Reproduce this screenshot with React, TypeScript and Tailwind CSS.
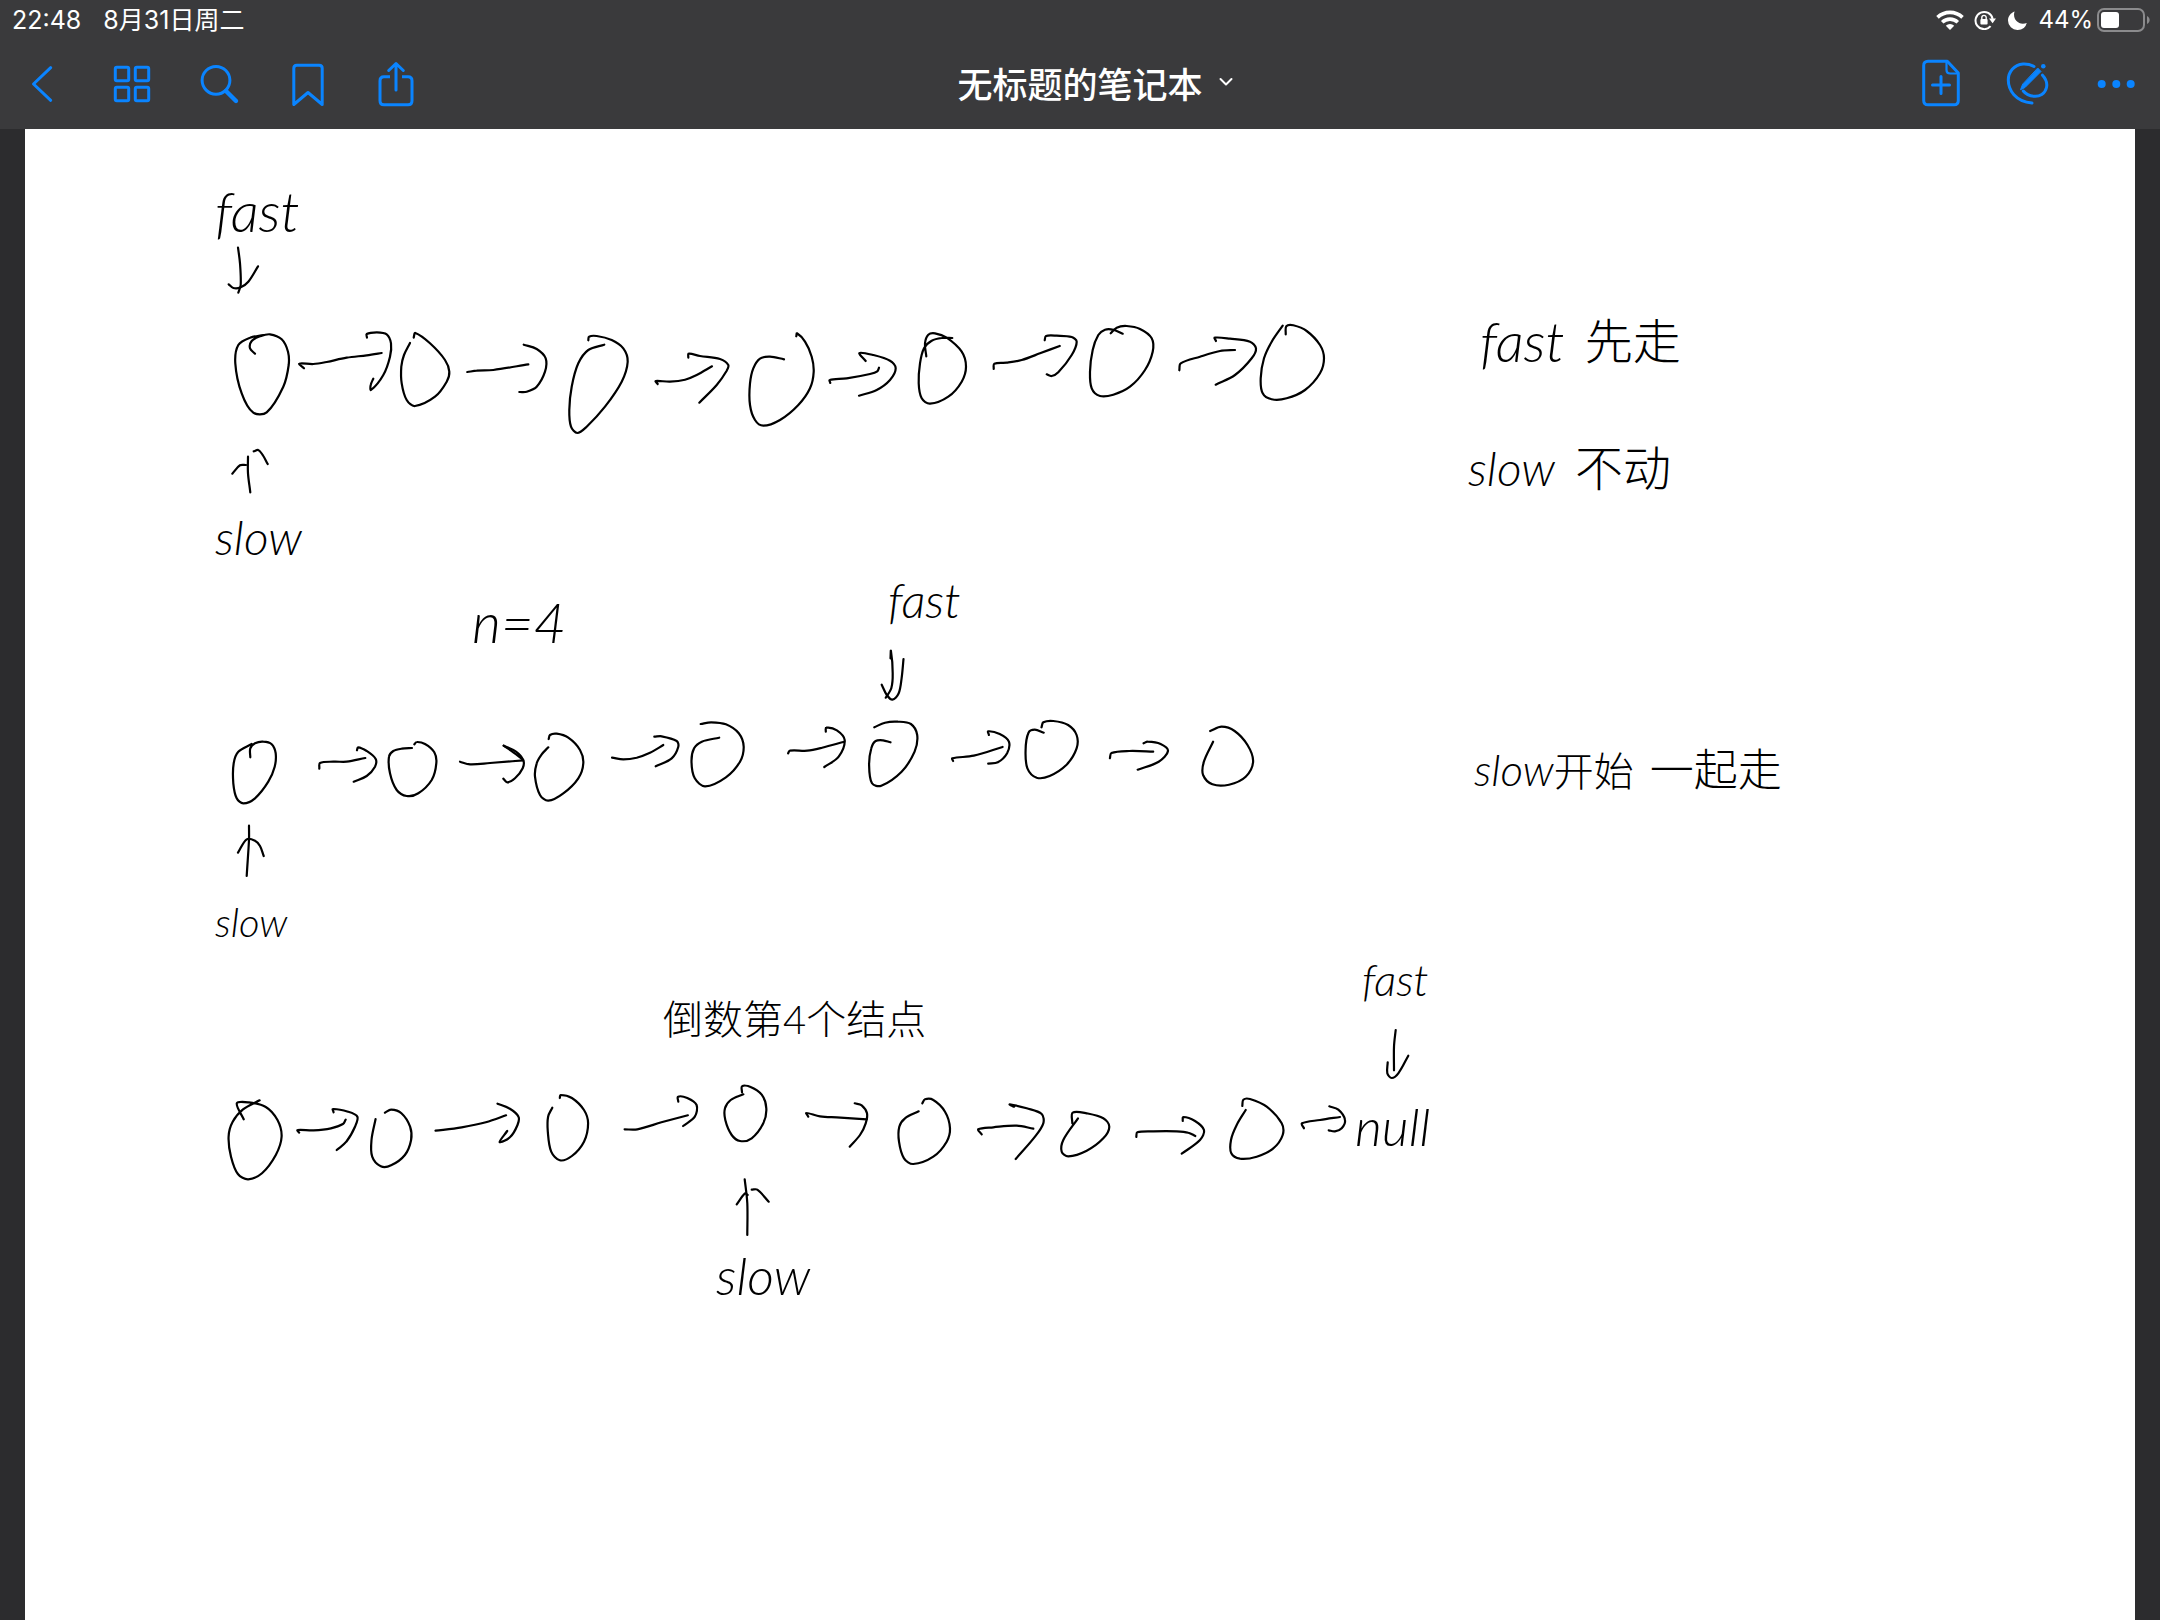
import type { ReactNode } from "react";

type Sheet = { x: number; y: number; sx: number; sy: number; lines: string[] };

/* Pen strokes, recorded in tiles of the page: each tile has an origin and a point density. */
const ink: Sheet[] = [
  {
    x: 200, y: 160, sx: 3, sy: 3,
    lines: [
      "114,263 120,310 122,375 115,398",
      "86,373 100,384 122,382 145,365 174,319",
      "165,581 150,565 155,543 180,529 210,523 245,538 264,575 266,615 250,680 200,757 160,758 125,700 106,610 115,555 150,533 190,525",
      "312,625 298,611 340,612 380,606 440,593 500,586 545,579",
      "501,533 500,522 530,517 560,523 573,550 570,590 550,645 513,690 512,675 520,656",
      "641,533 646,519 690,550 735,600 748,635 740,665 705,710 645,738 620,720 605,670 604,620 612,585 630,549",
      "802,636 830,632 880,630 985,613",
      "971,554 1010,567 1037,595 1035,635 1010,680 980,695 958,696",
      "1165,541 1167,530 1190,528 1235,540 1270,565 1283,605 1265,665 1215,740 1160,800 1132,819 1113,800 1108,750 1115,680 1135,610 1165,570 1213,554",
      "144,890 144,940 151,997",
      "97,941 120,916 138,915",
      "161,874 175,870 188,885 203,912",
    ],
  },
  {
    x: 560, y: 300, sx: 3, sy: 3,
    lines: [
      "293,252 287,243 330,245 375,239 410,225 456,199",
      "385,173 386,161 420,168 480,177 505,195 500,212 470,255 418,308",
      "709,109 711,100 735,125 755,170 761,215 750,265 715,315 660,360 610,377 585,360 570,315 570,250 580,205 600,176 630,170 672,178",
      "811,249 809,240 860,235 930,222 952,214 957,203",
      "917,183 898,159 940,165 990,182 1007,205 990,240 950,270 897,287",
      "1099,169 1095,130 1105,104 1125,100 1160,113 1205,155 1218,200 1205,245 1165,290 1110,311 1085,295 1076,250 1080,190 1092,145 1115,122 1145,114 1177,114",
    ],
  },
  {
    x: 940, y: 300, sx: 3, sy: 3,
    lines: [
      "161,207 163,191 200,188 245,180 300,160 359,138",
      "314,121 318,108 350,107 395,111 410,125 395,165 355,217 335,228 320,223",
      "512,100 530,83 560,78 600,87 635,115 638,155 615,210 570,260 520,284 480,288 455,265 450,215 458,150 475,105 495,89 520,89 548,101",
      "718,211 722,190 780,170 840,153 885,150",
      "828,123 824,113 870,116 930,125 948,145 935,175 885,225 827,254",
      "1037,103 1039,79 1060,76 1100,93 1140,135 1152,175 1140,220 1095,270 1040,295 995,298 968,280 962,235 972,175 995,125 1028,77",
    ],
  },
  {
    x: 200, y: 560, sx: 3, sy: 3,
    lines: [
      "151,592 151,565 165,550 190,545 215,553 227,580 224,620 205,665 165,715 130,730 110,715 100,670 101,610 115,575 155,552",
      "358,626 360,609 400,605 440,605 496,594",
      "471,571 474,562 500,573 527,597 525,620 500,648 461,665",
      "643,553 650,546 675,552 703,577 709,610 695,660 655,700 620,708 590,690 570,640 567,590 580,573 605,566 636,564",
      "780,605 810,613 870,609 970,601",
      "911,557 940,577 968,598",
      "911,557 948,575 970,601 968,625 945,655 922,667 910,656",
      "1046,537 1050,525 1070,521 1105,533 1140,570 1150,610 1135,655 1090,700 1045,722 1020,705 1005,650 1010,610 1025,583 1045,562",
      "1236,593 1270,598 1310,593 1350,578 1390,555",
      "1363,530 1385,529 1430,543 1435,560 1415,595 1367,619",
      "147,797 147,840 140,948",
      "114,878 140,838 165,842 180,858 191,888",
    ],
  },
  {
    x: 700, y: 560, sx: 2.703, sy: 3,
    lines: [
      "2,492 30,487 70,493 105,520 118,560 108,605 70,652 14,679 -14,655 -23,605 -16,565 5,545 52,533",
      "238,580 243,572 290,572 330,563 390,545",
      "340,515 341,503 370,511 391,540 375,590 336,621",
      "471,502 500,488 535,485 570,492 587,525 580,575 545,635 490,677 465,670 457,615 463,565 475,543 495,541 515,547",
      "684,603 682,595 740,587 818,561",
      "781,525 779,514 810,522 835,545 830,580 805,607 779,611",
      "923,502 928,487 955,483 995,495 1018,525 1018,565 990,615 945,648 910,653 885,625 880,570 888,518 905,509 929,518",
      "1108,595 1112,579 1160,573 1225,575",
      "1199,550 1210,545 1245,552 1265,573 1240,605 1183,629",
      "1379,513 1410,500 1445,513 1480,555 1495,605 1475,650 1430,674 1385,673 1360,645 1362,605 1387,545",
      "515,295 516,272 521,340 517,385 502,413",
      "491,374 505,405 520,419 537,400 545,355 550,297",
    ],
  },
  {
    x: 200, y: 970, sx: 2.904, sy: 3,
    lines: [
      "127,448 107,400 140,397 190,410 225,450 237,500 220,555 180,610 140,628 110,612 90,560 83,500 95,455 125,418 173,391",
      "288,488 283,480 330,481 380,475 415,462 423,449",
      "388,427 386,417 430,425 457,440 450,470 425,515 397,540",
      "537,428 555,419 585,430 610,470 613,510 595,555 555,586 525,589 500,560 498,510 510,447",
      "684,482 760,472 830,457 889,436",
      "864,401 900,416 925,440 922,465 900,502 870,516 892,483",
      "1045,384 1047,375 1080,384 1115,420 1127,460 1115,515 1080,558 1045,571 1020,545 1010,485 1011,440 1023,413",
      "1233,478 1270,478 1340,457 1417,436",
      "1389,395 1388,380 1415,384 1442,405 1437,440 1403,468",
    ],
  },
  {
    x: 700, y: 1060, sx: 3, sy: 3,
    lines: [
      "126,97 126,79 150,80 185,104 199,145 190,190 155,235 120,243 95,225 76,180 75,145 92,120 130,103",
      "325,170 319,159 360,169 410,172 500,178",
      "464,130 485,136 501,160 497,190 480,225 449,260",
      "667,130 675,118 700,120 735,155 750,205 740,245 700,290 640,312 612,295 597,245 598,200 615,175 656,154",
      "845,223 835,208 880,202 950,197 1000,206",
      "942,140 929,133 980,145 1025,162 1030,190 1005,230 947,297",
      "1117,190 1118,158 1160,160 1210,175 1228,200 1210,235 1160,272 1105,289 1085,275 1090,240 1134,175",
      "134,358 142,430 142,525",
      "110,433 135,400 143,405",
      "155,389 172,389 206,425",
    ],
  },
  {
    x: 1100, y: 940, sx: 3, sy: 3,
    lines: [
      "109,591 112,577 160,574 230,574 265,578 286,588",
      "248,543 250,531 285,543 312,570 300,600 245,641",
      "427,498 430,479 450,477 500,500 545,550 548,585 520,625 470,650 420,656 394,640 393,600 410,555 437,510",
      "612,565 606,550 660,540 720,531",
      "688,499 715,509 735,540 725,565 705,574 686,571",
      "887,270 882,320 882,391",
      "863,367 862,400 875,414 895,400 925,347",
    ],
  },
];

/* Turns a list of points into a smooth curve through all of them. */
function smooth(line: string, s: Sheet) {
  const p = line.split(" ").map((pair) => {
    const [a, b] = pair.split(",").map(Number);
    return [s.x + a / s.sx, s.y + b / s.sy];
  });
  let d = `M${p[0][0].toFixed(1)} ${p[0][1].toFixed(1)}`;
  for (let i = 0; i < p.length - 1; i++) {
    const p0 = p[i - 1] ?? p[i];
    const p1 = p[i];
    const p2 = p[i + 1];
    const p3 = p[i + 2] ?? p2;
    const span = Math.hypot(p2[0] - p1[0], p2[1] - p1[1]);
    const before = Math.hypot(p1[0] - p0[0], p1[1] - p0[1]) + span || 1;
    const after = Math.hypot(p3[0] - p2[0], p3[1] - p2[1]) + span || 1;
    const k1 = span / before / 3;
    const k2 = span / after / 3;
    const c = [
      p1[0] + (p2[0] - p0[0]) * k1,
      p1[1] + (p2[1] - p0[1]) * k1,
      p2[0] - (p3[0] - p1[0]) * k2,
      p2[1] - (p3[1] - p1[1]) * k2,
      p2[0],
      p2[1],
    ].map((n) => n.toFixed(1));
    d += ` C${c.join(" ")}`;
  }
  return d;
}

function Tool({ label, children }: { label: string; children: ReactNode }) {
  return (
    <button type="button" aria-label={label} className="flex h-[88px] w-[88px] items-center justify-center">
      <svg
        viewBox="0 0 48 48"
        className="size-12 overflow-visible"
        fill="none"
        stroke="currentColor"
        strokeWidth="3"
        strokeLinecap="round"
        strokeLinejoin="round"
      >
        {children}
      </svg>
    </button>
  );
}

function StatusBar() {
  return (
    <div className="flex h-10 items-center justify-between pl-3 pr-[9px] text-2xl leading-none text-white">
      <div className="flex items-center gap-[22px] text-[25px]">
        <time>22:48</time>
        <span>8月31日周二</span>
      </div>
      <div className="flex items-center">
        <svg viewBox="0 0 28 20" className="mr-[10px] h-5 w-7" fill="none" stroke="currentColor" strokeWidth="3.6">
          <path d="M1.5 7.4a18 18 0 0 1 25 0" />
          <path d="M6.2 12.2a11.3 11.3 0 0 1 15.6 0" />
          <path d="M14 20l-4.2-4.3a6 6 0 0 1 8.4 0z" fill="currentColor" stroke="none" />
        </svg>
        <svg viewBox="0 0 22 20" className="mr-3 h-5 w-[22px]" fill="none" stroke="currentColor" strokeWidth="2">
          <path d="M16.6 16.2A8.6 8.6 0 1 1 18.6 9" />
          <path d="M15 8.6h7l-3.4 4.6z" fill="currentColor" stroke="none" />
          <rect x="6.4" y="9" width="7.2" height="5.6" rx="1" fill="currentColor" stroke="none" />
          <path d="M7.8 9.4V7.6a2.2 2.2 0 0 1 4.4 0v1.8" strokeWidth="1.4" />
        </svg>
        <svg viewBox="0 0 18 18" className="mr-[11px] size-[19px]" fill="currentColor">
          <path d="M6.3.4a7.4 7.4 0 0 0-.6 3c0 5 3.6 8.6 8.4 8.6 1.300 0 2.500-.2 3.700-.7A9 9 0 0 1 9.200 18 9 9 0 0 1 0 9C0 5 2.600 1.700 6.300.4z" />
        </svg>
        <span className="mr-1">44%</span>
        <svg viewBox="0 0 54 24" className="h-6 w-[54px]">
          <rect x="1" y="1" width="46" height="22" rx="6" fill="none" stroke="#8b8b8d" strokeWidth="2" />
          <rect x="4" y="4" width="18" height="16" rx="3" fill="#fff" />
          <path d="M50 8c3.500 1.500 3.500 6.500 0 8z" fill="#8b8b8d" />
        </svg>
      </div>
    </div>
  );
}

function Toolbar() {
  return (
    <nav className="grid h-[89px] grid-cols-[1fr_auto_1fr] items-start text-[#0a84ff]">
      <div className="flex">
        <Tool label="返回">
          <path d="M30.700 7.700 13.500 24l17.200 16.300" />
        </Tool>
        <Tool label="缩略图">
          <rect x="7.300" y="7.300" width="13.400" height="13.400" rx="1.500" />
          <rect x="27.300" y="7.300" width="13.400" height="13.400" rx="1.500" />
          <rect x="7.300" y="27.300" width="13.400" height="13.400" rx="1.500" />
          <rect x="27.300" y="27.300" width="13.400" height="13.400" rx="1.500" />
        </Tool>
        <Tool label="搜索">
          <circle cx="20" cy="20.300" r="13.900" />
          <path d="M30 31l10 10" strokeWidth="4.400" />
        </Tool>
        <Tool label="书签">
          <path d="M9.800 44.500V8.300q0-3 3-3h22.400q3 0 3 3v36.200L24 32.500z" />
        </Tool>
        <Tool label="分享">
          <path d="M18 16.700h-6q-4 0-4 4v20q0 4 4 4h24q4 0 4-4v-20q0-4-4-4h-6" strokeLinecap="butt" />
          <path d="M24 30V3.500M16.700 10.500 24 3.500l7.300 7" />
        </Tool>
      </div>
      <button
        type="button"
        className="relative flex h-[84px] items-center font-['Noto_Sans_CJK_SC',sans-serif] text-[35px] font-medium leading-none text-white"
      >
        无标题的笔记本
        <svg
          viewBox="0 0 14 10"
          className="absolute left-full ml-4 h-[10px] w-[14px]"
          fill="none"
          stroke="currentColor"
          strokeWidth="2"
          strokeLinecap="round"
          strokeLinejoin="round"
        >
          <path d="M1.500 2 7 7.500 12.500 2" />
        </svg>
      </button>
      <div className="flex justify-end">
        <Tool label="添加页面">
          <path d="M31.300 1.300H12q-4.300 0-4.300 4.300v34.800q0 4.300 4.300 4.300h26q4.300 0 4.300-4.300V13z" />
          <path d="M30.500 1.500V10q0 3.500 3.500 3.500h8" strokeWidth="2.200" />
          <path d="M16.500 25h17M25 16.500v17" />
        </Tool>
        <Tool label="手写笔">
          <path d="M30 6.500C26 4.200 22.500 3.800 19 4 10 4.800 4.300 12 4.300 20c0 10 7 21.500 23.700 23" />
          <path d="M38.500 15.200C42 19 43.500 23 42.500 27.500 41 34 35.500 36.800 30 36.300c-4.500-.4-8.500-2.500-10.700-5.300" />
          <path d="M34 8.300l3 3.200L21 27.500 16.500 29.700 18.500 24.500z" fill="currentColor" strokeWidth="1" />
          <circle cx="39.300" cy="6.300" r="2.300" fill="currentColor" stroke="none" />
        </Tool>
        <Tool label="更多">
          <g fill="currentColor" stroke="none">
            <circle cx="9.700" cy="24" r="4" />
            <circle cx="24.300" cy="24" r="4" />
            <circle cx="38.700" cy="24" r="4" />
          </g>
        </Tool>
      </div>
    </nav>
  );
}

function Page() {
  return (
    <main className="relative mx-[25px] grow overflow-hidden bg-white font-[Lato,'Noto_Sans_CJK_SC',sans-serif] font-light italic leading-none whitespace-nowrap text-black">
      <svg
        viewBox="25 129 2110 1491"
        className="block w-full"
        fill="none"
        stroke="currentColor"
        strokeWidth="2.2"
        strokeLinecap="round"
        strokeLinejoin="round"
      >
        {ink.flatMap((s) => s.lines.map((line) => <path key={`${s.x} ${s.y} ${line}`} d={smooth(line, s)} />))}
      </svg>
      <span className="absolute left-[190px] top-[54px] text-[56px]">fast</span>
      <span className="absolute left-[190px] top-[384px] text-[48px]">slow</span>
      <span className="absolute left-[1455px] top-[184px] flex items-center gap-5 text-[56px]">
        fast <span className="text-[48px] not-italic">先走</span>
      </span>
      <span className="absolute left-[1443px] top-[315px] flex items-center gap-5 text-[48px]">
        slow <span className="text-[48px] not-italic">不动</span>
      </span>
      <span className="absolute left-[447px] top-[465px] text-[56px]">n=4</span>
      <span className="absolute left-[863px] top-[447px] text-[48px]">fast</span>
      <span className="absolute left-[190px] top-[773px] text-[40px]">slow</span>
      <span className="absolute left-[1449px] top-[618px] flex items-center gap-4 text-[44px]">
        <span>slow<span className="text-[40px] not-italic">开始</span></span>
        <span className="text-[44px] not-italic">一起走</span>
      </span>
      <span className="absolute left-[638px] top-[870px] text-[40px] not-italic">倒数第4个结点</span>
      <span className="absolute left-[1337px] top-[828px] text-[44px]">fast</span>
      <span className="absolute left-[1330px] top-[971px] text-[52px]">null</span>
      <span className="absolute left-[691px] top-[1120px] text-[52px]">slow</span>
    </main>
  );
}

export default function App() {
  return (
    <div className="flex min-h-screen flex-col bg-[#2c2c2e] font-[Inter,'Noto_Sans_CJK_SC',sans-serif]">
      <header className="bg-[#3a3a3c]">
        <StatusBar />
        <Toolbar />
      </header>
      <Page />
    </div>
  );
}
